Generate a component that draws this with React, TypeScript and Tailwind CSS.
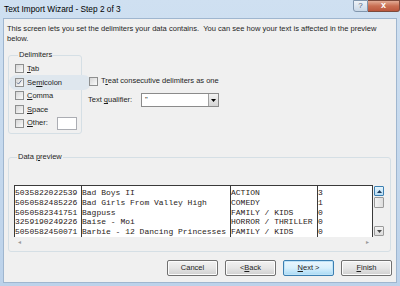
import React from 'react';

const ui = { fontFamily: '"Liberation Sans", Arial, sans-serif' };
const mono = { fontFamily: '"Liberation Mono", "Courier New", monospace' };

// 访问键下划线
const Key = ({ children }: { children: React.ReactNode }) => <span className="underline">{children}</span>;

const CheckBox = ({ checked = false }: { checked?: boolean }) => (
  <span className="relative w-[9px] h-[9px] shrink-0 border border-[#8e8f8f] bg-gradient-to-br from-[#d6d6d6] to-[#fbfbfb]">
    {checked && (
      <svg viewBox="0 0 9 9" className="absolute inset-0 w-[7px] h-[7px]">
        <path d="M1.3 4.6 L3.2 6.5 L7 1.6" fill="none" stroke="#4d6185" strokeWidth="1.1" />
      </svg>
    )}
  </span>
);

const Option = ({ label, checked, hover }: { label: React.ReactNode; checked?: boolean; hover?: boolean }) => (
  <div className="relative flex items-center gap-[3px] h-[13.5px]">
    {hover && <span className="absolute -left-[6px] -right-[10px] -top-[1px] -bottom-[1px] rounded-full bg-[#dfe7ee]" />}
    <span className="relative flex items-center gap-[3px]">
      <CheckBox checked={checked} />
      <span>{label}</span>
    </span>
  </div>
);

const Btn = ({ children, primary }: { children: React.ReactNode; primary?: boolean }) => (
  <div
    className={
      'w-[51px] h-[16px] rounded-[2px] border flex items-center justify-center ' +
      (primary
        ? 'border-[#3c7fb1] bg-gradient-to-b from-[#eaf6fd] via-[#d9f0fc] to-[#a7d9f5] shadow-[inset_0_0_0_1px_#bfe3f7]'
        : 'border-[#707070] bg-gradient-to-b from-[#f2f2f2] via-[#e6e6e6] to-[#cfcfcf] shadow-[inset_0_0_0_1px_#fcfcfc]')
    }
  >
    {children}
  </div>
);

const rows = [
  ['5035822022539', 'Bad Boys II', 'ACTION', '3'],
  ['5050582485226', 'Bad Girls From Valley High', 'COMEDY', '1'],
  ['5050582341751', 'Bagpuss', 'FAMILY / KIDS', '0'],
  ['3259190249226', 'Baise - Moi', 'HORROR / THRILLER', '0'],
  ['5050582450071', 'Barbie - 12 Dancing Princesses', 'FAMILY / KIDS', '0'],
];

const colW = ['w-[68px] border-l', 'w-[149px]', 'w-[87px]', 'w-[55px]'];

export default function App() {
  return (
    <div className="w-[400px] h-[286px] flex flex-col bg-gradient-to-b from-[#cfe0f1] to-[#bcd2ea] text-[7.5px] text-[#1e1e1e] overflow-hidden" style={ui}>
      {/* 标题栏 */}
      <div className="h-[18px] flex items-start shrink-0">
        <div className="pl-[4px] pt-[4px] text-[8.3px] leading-[10px] text-black">Text Import Wizard - Step 2 of 3</div>
        <div className="ml-auto flex">
          <div className="w-[15px] h-[12px] border border-[#8196ad] rounded-bl-[3px] bg-gradient-to-b from-[#eef3f8] to-[#cad8e7] flex items-center justify-center text-[8px] text-[#4f6178]">?</div>
          <div className="w-[32px] h-[12px] border border-l-0 border-[#7d4a3c] rounded-br-[3px] bg-gradient-to-b from-[#e2ab95] via-[#c96f53] to-[#bb573d] flex items-center justify-center text-[9px] font-bold text-white">x</div>
        </div>
      </div>

      {/* 客户区 */}
      <div className="flex-1 ml-[3px] mr-[3px] mb-[3px] border border-[#9fb6cf] bg-[#f0f0f0] flex flex-col">
        <div className="pl-[3px] pt-[5px] text-[7.55px] leading-[10px] whitespace-nowrap">
          This screen lets you set the delimiters your data contains.&nbsp; You can see how your text is affected in the preview
          <br />
          below.
        </div>

        <div className="flex mt-[6px] ml-[4px]">
          <fieldset className="w-[74px] h-[84px] border border-[#d5dfe5] rounded-[3px] pl-[6px] pt-[2px]">
            <legend className="ml-[3px] px-[1px] leading-[10px]">Delimiters</legend>
            <Option label={<><Key>T</Key>ab</>} />
            <Option label={<>Se<Key>m</Key>icolon</>} checked hover />
            <Option label={<><Key>C</Key>omma</>} />
            <Option label={<><Key>S</Key>pace</>} />
            <div className="flex items-center gap-[3px] h-[14px]">
              <CheckBox />
              <span><Key>O</Key>ther:</span>
              <span className="ml-[6px] w-[20px] h-[13px] border border-[#abadb3] bg-white" />
            </div>
          </fieldset>

          <div className="ml-[6px] pt-[25px] flex flex-col">
            <div className="flex items-center gap-[3px] h-[12px] ml-[1px]">
              <CheckBox />
              <span>T<Key>r</Key>eat consecutive delimiters as one</span>
            </div>
            <div className="flex items-center mt-[6px] h-[14px]">
              <span className="w-[53px]">Text <Key>q</Key>ualifier:</span>
              <div className="w-[78px] h-[14px] border border-[#8b8b8b] bg-white flex">
                <span className="flex-1 pl-[3px] leading-[12px]">"</span>
                <span className="w-[10px] h-full border-l border-[#a0a0a0] bg-gradient-to-b from-[#f3f3f3] to-[#d5d5d5] flex items-center justify-center">
                  <svg viewBox="0 0 5 3" className="w-[5px] h-[3px]"><path d="M0 0 H5 L2.5 3 Z" fill="#000" /></svg>
                </span>
              </div>
            </div>
          </div>
        </div>

        <fieldset className="mt-[18px] ml-[4px] mr-[5px] h-[100px] border border-[#d5dfe5] rounded-[3px] pl-[5px]">
          <legend className="ml-[3px] px-[1px] leading-[10px]">Data <Key>p</Key>review</legend>
          <div className="mt-[23px] flex w-[372px]">
            <div className="flex flex-col">
              <div className="flex bg-white border-t border-[#3a3a3a] h-[52px] text-[8px] leading-[9.75px] text-[#2a2218]" style={mono}>
                {colW.map((w, c) => (
                  <div key={c} className={'flex flex-col pt-[2px] border-r border-[#3a3a3a] overflow-hidden whitespace-pre ' + w}>
                    {rows.map((r, i) => (
                      <div key={i}>{r[c]}</div>
                    ))}
                  </div>
                ))}
              </div>
              <div className="h-[10px] flex items-center justify-between px-[4px] text-[6px] text-[#9a9a9a]">
                <span>◂</span>
                <span>▸</span>
              </div>
            </div>
            <div className="ml-[1px] w-[10px] h-[52px] flex flex-col">
              <div className="h-[10px] mt-[1px] border border-[#3c7fb1] rounded-[1px] bg-gradient-to-b from-[#e5f4fc] to-[#b6dcf4] flex items-center justify-center">
                <svg viewBox="0 0 5 3" className="w-[5px] h-[3px]"><path d="M0 3 H5 L2.5 0 Z" fill="#1c3a5c" /></svg>
              </div>
              <div className="h-[11px] mt-[1px] border border-[#9a9a9a] rounded-[1px] bg-gradient-to-r from-[#f3f3f3] to-[#dedede]" />
              <div className="flex-1" />
              <div className="h-[10px] mb-[1px] border border-[#9a9a9a] rounded-[1px] bg-gradient-to-b from-[#f3f3f3] to-[#dcdcdc] flex items-center justify-center">
                <svg viewBox="0 0 5 3" className="w-[5px] h-[3px]"><path d="M0 0 H5 L2.5 3 Z" fill="#4a4a4a" /></svg>
              </div>
            </div>
          </div>
        </fieldset>

        <div className="flex justify-end gap-[7px] mt-[8px] mr-[4px]">
          <Btn>Cancel</Btn>
          <Btn>&lt; <Key>B</Key>ack</Btn>
          <Btn primary><Key>N</Key>ext &gt;</Btn>
          <Btn><Key>F</Key>inish</Btn>
        </div>
      </div>
    </div>
  );
}
